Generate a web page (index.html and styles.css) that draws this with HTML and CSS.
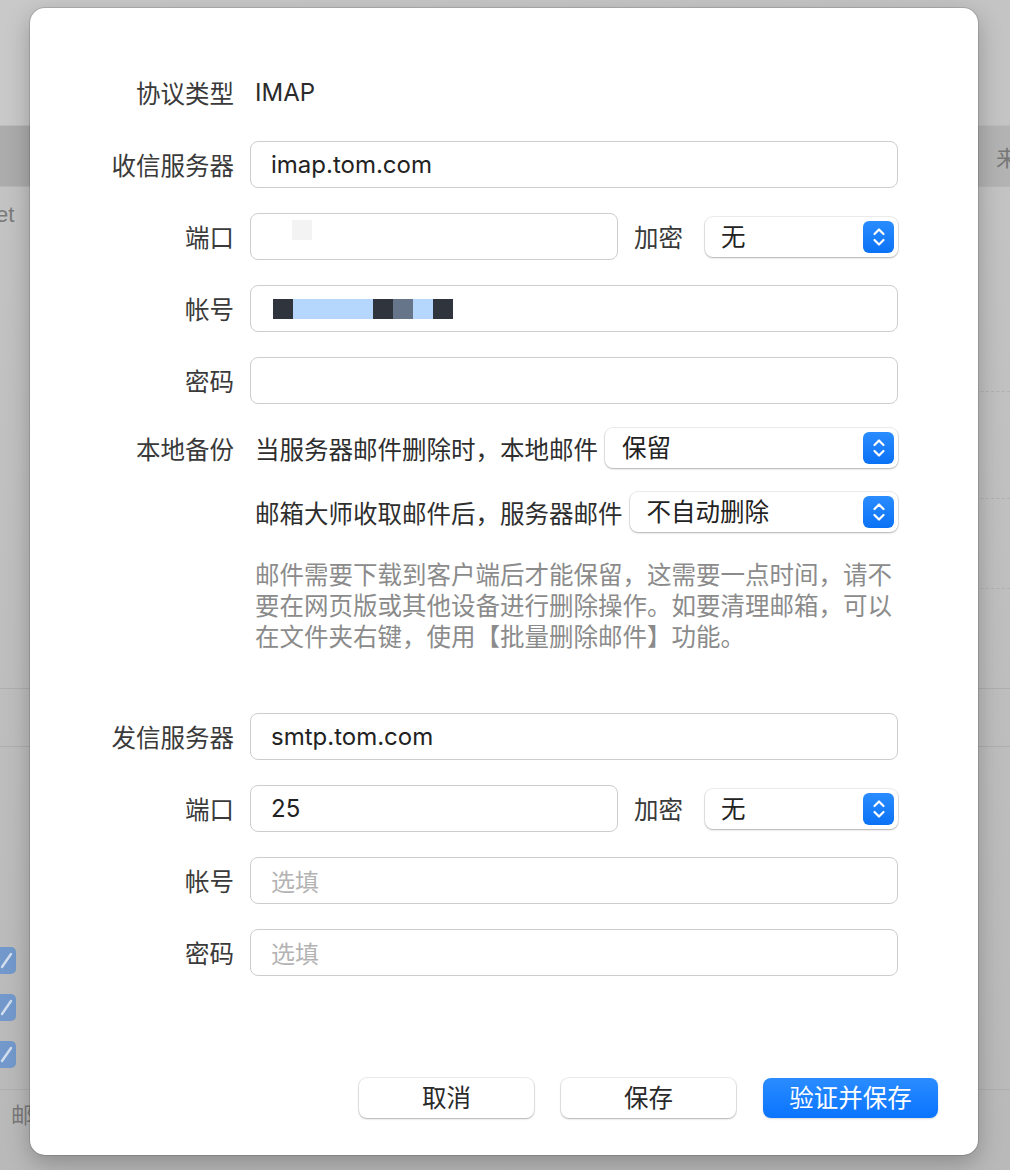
FILE: index.html
```html
<!DOCTYPE html>
<html lang="zh-CN">
<head>
    <meta charset="UTF-8">
    <title>账户设置</title>
    <link rel="stylesheet" href="styles.css">
</head>
<body>
    <div class="backdrop">
        <div class="bd-top"></div>
        <div class="bd-band"><span class="bd-right-text">来</span></div>
        <div class="bd-body">
            <div class="bd-left-text">et</div>
            <div class="bd-dash d1"></div>
            <div class="bd-dash d2"></div>
            <div class="bd-dash d3"></div>
            <div class="bd-line l1"></div>
            <div class="bd-line l2"></div>
            <div class="bd-checks">
                <span class="bd-check"><svg viewBox="0 0 22 27" width="22" height="27"><path d="M8 20L17 7" stroke="#d3deee" stroke-width="2.4" stroke-linecap="round"/></svg></span>
                <span class="bd-check"><svg viewBox="0 0 22 27" width="22" height="27"><path d="M8 20L17 7" stroke="#d3deee" stroke-width="2.4" stroke-linecap="round"/></svg></span>
                <span class="bd-check"><svg viewBox="0 0 22 27" width="22" height="27"><path d="M8 20L17 7" stroke="#d3deee" stroke-width="2.4" stroke-linecap="round"/></svg></span>
            </div>
            <div class="bd-line l3"></div>
            <div class="bd-bottom-text">邮</div>
        </div>
    </div>

    <div class="dialog">
        <div class="form">
            <label class="row-label">协议类型</label>
            <div class="plain-value">IMAP</div>

            <label class="row-label">收信服务器</label>
            <div class="field">imap.tom.com</div>

            <label class="row-label">端口</label>
            <div class="split">
                <div class="field port"><span class="blur-dot"></span></div>
                <span class="inline-label">加密</span>
                <div class="select narrow">无<span class="stepper"><svg viewBox="0 0 14 22" width="14" height="22"><path d="M2.5 8L7 3.5 11.5 8M2.5 14L7 18.5 11.5 14" fill="none" stroke="#fff" stroke-width="2.2" stroke-linecap="round" stroke-linejoin="round"/></svg></span></div>
            </div>

            <label class="row-label">帐号</label>
            <div class="field masked">
                <span class="px dark"></span><span class="px sel w4"></span><span class="px dark"></span><span class="px slate"></span><span class="px sel"></span><span class="px dark"></span>
            </div>

            <label class="row-label">密码</label>
            <div class="field"></div>

            <label class="row-label">本地备份</label>
            <div class="option-line">
                <span>当服务器邮件删除时，本地邮件</span>
                <div class="select grow">保留<span class="stepper"><svg viewBox="0 0 14 22" width="14" height="22"><path d="M2.5 8L7 3.5 11.5 8M2.5 14L7 18.5 11.5 14" fill="none" stroke="#fff" stroke-width="2.2" stroke-linecap="round" stroke-linejoin="round"/></svg></span></div>
            </div>

            <span></span>
            <div class="option-line">
                <span>邮箱大师收取邮件后，服务器邮件</span>
                <div class="select grow">不自动删除<span class="stepper"><svg viewBox="0 0 14 22" width="14" height="22"><path d="M2.5 8L7 3.5 11.5 8M2.5 14L7 18.5 11.5 14" fill="none" stroke="#fff" stroke-width="2.2" stroke-linecap="round" stroke-linejoin="round"/></svg></span></div>
            </div>

            <span></span>
            <p class="note">邮件需要下载到客户端后才能保留，这需要一点时间，请不要在网页版或其他设备进行删除操作。如要清理邮箱，可以在文件夹右键，使用【批量删除邮件】功能。</p>

            <label class="row-label section-start">发信服务器</label>
            <div class="field section-start">smtp.tom.com</div>

            <label class="row-label">端口</label>
            <div class="split">
                <div class="field port">25</div>
                <span class="inline-label">加密</span>
                <div class="select narrow">无<span class="stepper"><svg viewBox="0 0 14 22" width="14" height="22"><path d="M2.5 8L7 3.5 11.5 8M2.5 14L7 18.5 11.5 14" fill="none" stroke="#fff" stroke-width="2.2" stroke-linecap="round" stroke-linejoin="round"/></svg></span></div>
            </div>

            <label class="row-label">帐号</label>
            <div class="field placeholder">选填</div>

            <label class="row-label">密码</label>
            <div class="field placeholder">选填</div>
        </div>

        <div class="actions">
            <button class="btn">取消</button>
            <button class="btn">保存</button>
            <button class="btn primary">验证并保存</button>
        </div>
    </div>
</body>
</html>
```

FILE: styles.css
```css
body {
    margin: 0;
    width: 1010px;
    height: 1170px;
    overflow: hidden;
    position: relative;
    font-family: "Inter", "Noto Sans CJK SC", sans-serif;
    background-color: #b9b9b9;
}

/* dimmed window behind the sheet */
.backdrop {
    display: flex;
    flex-direction: column;
    height: 100%;
}
.bd-top {
    height: 125px;
    background: linear-gradient(to right, #c9c9c9, #c4c4c4);
}
.bd-band {
    height: 60px;
    background: linear-gradient(to right, #acacac, #b3b3b3);
    border-top: 1px solid #bcbcbc;
    border-bottom: 1px solid #b6b6b6;
    display: flex;
    justify-content: flex-end;
    align-items: center;
}
.bd-right-text {
    color: #777;
    font-size: 22px;
    margin-right: -8px;
}
.bd-body {
    flex: 1;
    position: relative;
    background: linear-gradient(to bottom, #c3c3c3, #b9b9b9);
}
.bd-left-text {
    position: absolute;
    left: -4px;
    top: 15px;
    font-size: 22px;
    color: #7a7a7a;
    font-family: "Liberation Sans", sans-serif;
}
.bd-dash {
    position: absolute;
    right: 0;
    width: 40px;
    border-top: 1px dashed #b0b0b0;
}
.d1 { top: 204px; }
.d2 { top: 311px; }
.d3 { top: 401px; }
.bd-line {
    position: absolute;
    left: 0;
    right: 0;
    border-top: 1px solid #afafaf;
}
.l1 { top: 501px; }
.l2 { top: 559px; }
.l3 { top: 902px; }
.bd-checks {
    position: absolute;
    left: -6px;
    top: 760px;
    display: flex;
    flex-direction: column;
    gap: 20px;
}
.bd-check {
    width: 22px;
    height: 27px;
    border-radius: 5px;
    background-color: #7399cc;
    display: flex;
}
.bd-bottom-text {
    position: absolute;
    left: 11px;
    top: 910px;
    font-size: 22px;
    color: #7a7a7a;
}

/* sheet */
.dialog {
    position: absolute;
    left: 30px;
    top: 8px;
    width: 948px;
    height: 1147px;
    box-sizing: border-box;
    background-color: #fff;
    border-radius: 15px;
    box-shadow: 0 0 0 1px rgba(0, 0, 0, 0.12), 0 8px 24px rgba(0, 0, 0, 0.25);
    padding-top: 61px;
    display: flex;
    flex-direction: column;
}
.form {
    display: grid;
    grid-template-columns: 204px 648px;
    column-gap: 16px;
    row-gap: 25px;
    align-items: center;
    color: #333;
    font-size: 24.5px;
}
.row-label {
    text-align: right;
    color: #3a3a3a;
    white-space: nowrap;
}
.plain-value {
    height: 47px;
    line-height: 47px;
    padding-left: 5px;
    font-size: 24px;
    color: #2b2b2b;
}
.field {
    height: 47px;
    box-sizing: border-box;
    border: 1px solid #cdcdcd;
    border-radius: 8px;
    padding-left: 20px;
    display: flex;
    align-items: center;
    font-size: 24px;
    color: #222;
    position: relative;
}
.field.placeholder {
    color: #b3b3b3;
}
.split {
    display: flex;
    align-items: center;
}
.field.port {
    width: 368px;
}
.blur-dot {
    position: absolute;
    left: 41px;
    top: 6px;
    width: 20px;
    height: 20px;
    background-color: #f3f3f3;
}
.inline-label {
    margin-left: 16px;
    margin-right: 22px;
    color: #3a3a3a;
}
.select {
    height: 40px;
    box-sizing: border-box;
    background-color: #fff;
    border-radius: 8px;
    box-shadow: 0 0 0 1px rgba(0, 0, 0, 0.07), 0 1px 2px rgba(0, 0, 0, 0.25);
    padding-left: 16px;
    padding-bottom: 3px;
    display: flex;
    align-items: center;
    position: relative;
    color: #222;
}
.select.narrow {
    width: 193px;
}
.select.grow {
    flex: 1;
    padding-left: 17px;
}
.stepper {
    position: absolute;
    right: 4px;
    top: 4px;
    width: 31px;
    height: 32px;
    border-radius: 6px;
    background: linear-gradient(to bottom, #2a8cff, #0a72f5);
    display: flex;
    align-items: center;
    justify-content: center;
}
.masked {
    padding-left: 22px;
}
.px {
    width: 20px;
    height: 20px;
    background-color: #b6d7fd;
}
.px.w4 { width: 80px; }
.px.dark { background-color: #30343d; }
.px.slate { background-color: #667589; }
.option-line {
    display: flex;
    align-items: center;
    gap: 7px;
    padding-left: 5px;
    color: #2e2e2e;
    height: 40px;
    margin-top: -1px;
}
.option-line span {
    white-space: nowrap;
}
.note {
    margin: 3px 0 0;
    padding-left: 5px;
    width: 640px;
    font-size: 24.5px;
    line-height: 31px;
    color: #8b8b8b;
}
.section-start {
    margin-top: 35px;
}

.actions {
    margin-top: auto;
    margin-bottom: 37px;
    padding-right: 40px;
    display: flex;
    justify-content: flex-end;
    gap: 27px;
}
.btn {
    width: 175px;
    height: 40px;
    border: none;
    border-radius: 8px;
    background-color: #fff;
    box-shadow: 0 0 0 1px rgba(0, 0, 0, 0.07), 0 1px 2px rgba(0, 0, 0, 0.25);
    font-family: "Noto Sans CJK SC", sans-serif;
    font-size: 24.5px;
    padding: 0 0 4px;
    color: #2a2a2a;
    cursor: pointer;
}
.btn.primary {
    background: linear-gradient(to bottom, #2a8cff, #0a74ff);
    color: #fff;
    box-shadow: 0 1px 2px rgba(0, 0, 0, 0.15);
}
```
